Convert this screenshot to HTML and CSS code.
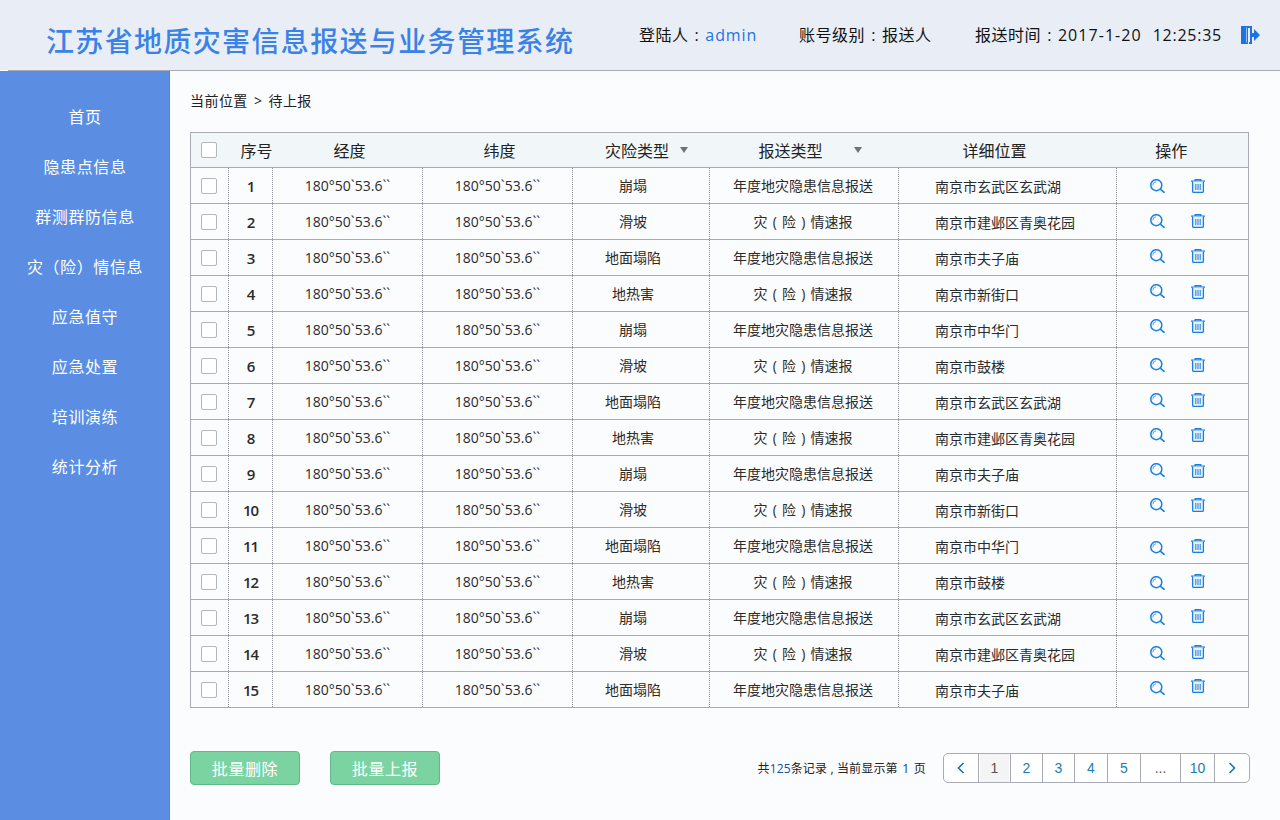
FILE: index.html
```html
<!DOCTYPE html>
<html lang="zh-CN">
<head>
<meta charset="utf-8">
<title>江苏省地质灾害信息报送与业务管理系统</title>
<link rel="stylesheet" href="styles.css">
</head>
<body>
<svg class="defs" width="0" height="0" aria-hidden="true">
  <symbol id="i-search" viewBox="0 0 15 14"><circle cx="6.3" cy="6.2" r="5.5" fill="none" stroke="currentColor" stroke-width="1.5"/><path d="M10.2 10.1 14.6 13.8" fill="none" stroke="currentColor" stroke-width="1.6"/><path d="M2.8 6.4A3.4 3.4 0 0 1 6 2.8" fill="none" stroke="currentColor" stroke-width=".9" opacity=".8"/></symbol>
  <symbol id="i-trash" viewBox="0 0 14 14"><path d="M0 2.1H14M4.2 1.9V.6H9.8V1.9" fill="none" stroke="currentColor" stroke-width="1.3"/><path d="M1.6 2.6V12.2Q1.6 13.4 2.8 13.4H11.2Q12.4 13.4 12.4 12.2V2.6" fill="#e6f1fb" stroke="currentColor" stroke-width="1.3"/><path d="M4.8 5V11M7 5V11M9.2 5V11" fill="none" stroke="currentColor" stroke-width="1"/></symbol>
</svg>
<header class="top">
  <h1 class="title">江苏省地质灾害信息报送与业务管理系统</h1>
  <div class="info">
    <span class="login">登陆人<i class="colon">:</i><b class="admin">admin</b></span>
    <span class="level">账号级别<i class="colon">:</i>报送人</span>
    <span class="time">报送时间<i class="colon">:</i><i class="date">2017-1-20</i><i class="clock">12:25:35</i></span>
    <svg class="exit" viewBox="0 0 19 18" width="19" height="18"><path d="M0 0H11V7H9V2H7V18H0Z" fill="#1c73e6"/><path d="M5 1.5H6V16.5H5Z" fill="#9cc3f4"/><path d="M9 11H11V18H8V16H9Z" fill="#1c73e6"/><path d="M9 7H13V3L19 9 13 15V11H9Z" fill="#1c73e6"/></svg>
  </div>
</header>
<div class="shell">
  <nav class="side">
    <a>首页</a><a>隐患点信息</a><a>群测群防信息</a><a>灾（险）情信息</a><a>应急值守</a><a>应急处置</a><a>培训演练</a><a>统计分析</a>
  </nav>
  <main class="main">
    <div class="crumb">当前位置 &gt; 待上报</div>
    <table class="grid">
      <colgroup><col class="c0"><col class="c1"><col class="c2"><col class="c3"><col class="c4"><col class="c5"><col class="c6"><col class="c7"></colgroup>
      <thead><tr>
        <th><span class="box"></span></th><th class="h-no">序号</th><th class="h-geo">经度</th><th class="h-geo">纬度</th>
        <th><span class="sort s4">灾险类型<i class="tri"></i></span></th>
        <th><span class="sort s5">报送类型<i class="tri"></i></span></th>
        <th class="h-loc">详细位置</th><th class="h-op">操作</th>
      </tr></thead>
      <tbody>
        <tr><td><span class="box"></span></td><td class="no">1</td><td>180°50`53.6``</td><td>180°50`53.6``</td><td class="kind">崩塌</td><td class="kind2">年度地灾隐患信息报送</td><td class="loc">南京市玄武区玄武湖</td><td class="ops"><svg class="ic-s"><use href="#i-search"/></svg><svg class="ic-t"><use href="#i-trash"/></svg></td></tr>
        <tr><td><span class="box"></span></td><td class="no">2</td><td>180°50`53.6``</td><td>180°50`53.6``</td><td class="kind">滑坡</td><td class="kind2">灾 ( 险 ) 情速报</td><td class="loc">南京市建邺区青奥花园</td><td class="ops"><svg class="ic-s"><use href="#i-search"/></svg><svg class="ic-t"><use href="#i-trash"/></svg></td></tr>
        <tr><td><span class="box"></span></td><td class="no">3</td><td>180°50`53.6``</td><td>180°50`53.6``</td><td class="kind">地面塌陷</td><td class="kind2">年度地灾隐患信息报送</td><td class="loc">南京市夫子庙</td><td class="ops"><svg class="ic-s"><use href="#i-search"/></svg><svg class="ic-t"><use href="#i-trash"/></svg></td></tr>
        <tr><td><span class="box"></span></td><td class="no">4</td><td>180°50`53.6``</td><td>180°50`53.6``</td><td class="kind">地热害</td><td class="kind2">灾 ( 险 ) 情速报</td><td class="loc">南京市新街口</td><td class="ops"><svg class="ic-s"><use href="#i-search"/></svg><svg class="ic-t"><use href="#i-trash"/></svg></td></tr>
        <tr><td><span class="box"></span></td><td class="no">5</td><td>180°50`53.6``</td><td>180°50`53.6``</td><td class="kind">崩塌</td><td class="kind2">年度地灾隐患信息报送</td><td class="loc">南京市中华门</td><td class="ops"><svg class="ic-s"><use href="#i-search"/></svg><svg class="ic-t"><use href="#i-trash"/></svg></td></tr>
        <tr><td><span class="box"></span></td><td class="no">6</td><td>180°50`53.6``</td><td>180°50`53.6``</td><td class="kind">滑坡</td><td class="kind2">灾 ( 险 ) 情速报</td><td class="loc">南京市鼓楼</td><td class="ops"><svg class="ic-s"><use href="#i-search"/></svg><svg class="ic-t"><use href="#i-trash"/></svg></td></tr>
        <tr><td><span class="box"></span></td><td class="no">7</td><td>180°50`53.6``</td><td>180°50`53.6``</td><td class="kind">地面塌陷</td><td class="kind2">年度地灾隐患信息报送</td><td class="loc">南京市玄武区玄武湖</td><td class="ops"><svg class="ic-s"><use href="#i-search"/></svg><svg class="ic-t"><use href="#i-trash"/></svg></td></tr>
        <tr><td><span class="box"></span></td><td class="no">8</td><td>180°50`53.6``</td><td>180°50`53.6``</td><td class="kind">地热害</td><td class="kind2">灾 ( 险 ) 情速报</td><td class="loc">南京市建邺区青奥花园</td><td class="ops"><svg class="ic-s"><use href="#i-search"/></svg><svg class="ic-t"><use href="#i-trash"/></svg></td></tr>
        <tr><td><span class="box"></span></td><td class="no">9</td><td>180°50`53.6``</td><td>180°50`53.6``</td><td class="kind">崩塌</td><td class="kind2">年度地灾隐患信息报送</td><td class="loc">南京市夫子庙</td><td class="ops"><svg class="ic-s"><use href="#i-search"/></svg><svg class="ic-t"><use href="#i-trash"/></svg></td></tr>
        <tr><td><span class="box"></span></td><td class="no">10</td><td>180°50`53.6``</td><td>180°50`53.6``</td><td class="kind">滑坡</td><td class="kind2">灾 ( 险 ) 情速报</td><td class="loc">南京市新街口</td><td class="ops"><svg class="ic-s"><use href="#i-search"/></svg><svg class="ic-t"><use href="#i-trash"/></svg></td></tr>
        <tr><td><span class="box"></span></td><td class="no">11</td><td>180°50`53.6``</td><td>180°50`53.6``</td><td class="kind">地面塌陷</td><td class="kind2">年度地灾隐患信息报送</td><td class="loc">南京市中华门</td><td class="ops"><svg class="ic-s"><use href="#i-search"/></svg><svg class="ic-t"><use href="#i-trash"/></svg></td></tr>
        <tr><td><span class="box"></span></td><td class="no">12</td><td>180°50`53.6``</td><td>180°50`53.6``</td><td class="kind">地热害</td><td class="kind2">灾 ( 险 ) 情速报</td><td class="loc">南京市鼓楼</td><td class="ops"><svg class="ic-s"><use href="#i-search"/></svg><svg class="ic-t"><use href="#i-trash"/></svg></td></tr>
        <tr><td><span class="box"></span></td><td class="no">13</td><td>180°50`53.6``</td><td>180°50`53.6``</td><td class="kind">崩塌</td><td class="kind2">年度地灾隐患信息报送</td><td class="loc">南京市玄武区玄武湖</td><td class="ops"><svg class="ic-s"><use href="#i-search"/></svg><svg class="ic-t"><use href="#i-trash"/></svg></td></tr>
        <tr><td><span class="box"></span></td><td class="no">14</td><td>180°50`53.6``</td><td>180°50`53.6``</td><td class="kind">滑坡</td><td class="kind2">灾 ( 险 ) 情速报</td><td class="loc">南京市建邺区青奥花园</td><td class="ops"><svg class="ic-s"><use href="#i-search"/></svg><svg class="ic-t"><use href="#i-trash"/></svg></td></tr>
        <tr><td><span class="box"></span></td><td class="no">15</td><td>180°50`53.6``</td><td>180°50`53.6``</td><td class="kind">地面塌陷</td><td class="kind2">年度地灾隐患信息报送</td><td class="loc">南京市夫子庙</td><td class="ops"><svg class="ic-s"><use href="#i-search"/></svg><svg class="ic-t"><use href="#i-trash"/></svg></td></tr>
      </tbody>
    </table>
    <div class="foot">
      <button class="btn">批量删除</button>
      <button class="btn">批量上报</button>
      <div class="summary">共<b>125</b>条记录 , 当前显示第 <b class="cur">1</b> 页</div>
      <div class="pager">
        <a class="p arrow"><svg viewBox="0 0 10 14" width="10" height="14"><path d="M7.5 2 2.5 7 7.5 12" fill="none" stroke="currentColor" stroke-width="1.5"/></svg></a>
        <a class="p active">1</a><a class="p">2</a><a class="p">3</a><a class="p wide">4</a><a class="p wide">5</a><a class="p dots">...</a><a class="p ten">10</a>
        <a class="p arrow last"><svg viewBox="0 0 10 14" width="10" height="14"><path d="M2.5 2 7.5 7 2.5 12" fill="none" stroke="currentColor" stroke-width="1.5"/></svg></a>
      </div>
    </div>
  </main>
</div>
</body>
</html>
```
FILE: styles.css
```css
* { box-sizing: border-box; }
html, body { margin: 0; height: 100%; }
body {
  width: 1280px; height: 820px; overflow: hidden;
  background: #fbfcfe; color: #222;
  font-family: "Open Sans", "Noto Sans CJK SC", sans-serif;
  font-size: 14px;
}
.defs { position: absolute; }
.top {
  position: relative;
  height: 71px; display: flex; align-items: flex-start;
  background: #e9eef6; border-bottom: 1px solid #a9abb2;
}
.top::after { content: ""; position: absolute; left: 0; bottom: -1px; width: 8px; height: 1px; background: #fff; }
.title {
  margin: 22px 0 0 46px; font-size: 28px; line-height: 38px; font-weight: 500;
  letter-spacing: 1.35px; color: #3b82e6; white-space: nowrap;
}
.info { margin-left: auto; display: flex; align-items: center; height: 24px; margin-top: 23px; font-size: 16px; letter-spacing: .55px; color: #111; line-height: 24px; white-space: nowrap; }
.login { width: 160px; }
.colon { font-style: normal; margin: 0 6px; }
.admin { font-weight: 400; color: #1c73e6; letter-spacing: .9px; }
.level { width: 176px; }
.date { font-style: normal; letter-spacing: 1.05px; }
.clock { font-style: normal; margin-left: 11px; letter-spacing: .75px; }
.exit { margin: 0 20px 0 19px; }
.shell { display: flex; height: 749px; }
.side { width: 170px; background: #5b8ee2; border-right: 1px solid #6d7f9e; padding-top: 21px; flex: none; }
.side a { display: block; height: 50px; line-height: 50px; text-align: center; color: #fff; font-size: 16px; letter-spacing: .6px; padding-left: 1px; }
.main { flex: 1; padding: 20px 30px 0 20px; }
.crumb { font-size: 14px; letter-spacing: .45px; word-spacing: 2px; line-height: 20px; color: #222; }
.grid {
  margin-top: 21px; width: 1058px; table-layout: fixed; border-collapse: collapse;
  border: 1px solid #a9abb2;
}
.c0 { width: 38px; } .c1 { width: 44px; } .c2 { width: 150px; } .c3 { width: 150px; }
.c4 { width: 137px; } .c5 { width: 189px; } .c6 { width: 218px; } .c7 { width: 132px; }
th { height: 35px; padding: 0; background: #f1f6f9; font-weight: 400; font-size: 16px; color: #222; border-bottom: 1px solid #a9abb2; text-align: center; }
td { height: 36px; padding: 0; text-align: center; font-size: 14px; color: #2b2b2b; border-bottom: 1px solid #a9abb2; border-left: 1px dotted #8d8f96; white-space: nowrap; }
td:first-child { border-left: 0; }
.box { display: block; width: 16px; height: 16px; margin: 0 0 0 10px; background: #fff; border: 1px solid #b5b6bb; border-radius: 2px; }
.h-no { padding-left: 12px; }
.h-geo { padding-left: 4px; }
.h-loc { padding-right: 26px; }
.h-op { padding-right: 22px; }
.no { font-size: 15px; font-weight: 600; letter-spacing: -1px; padding-top: 1px; }
.kind { padding: 0 16px 2px 0; }
.kind2 { padding-bottom: 2px; padding-right: 2px; word-spacing: 1.5px; }
.loc { text-align: left; padding: 0 0 0 36px; }
.sort { display: inline-flex; align-items: center; }
.s4 { margin-left: 11px; }
.s5 { margin-left: 12px; }
.tri { width: 0; height: 0; border: 4.5px solid transparent; border-top: 6px solid #6f7276; border-bottom: 0; }
.s4 .tri { margin-left: 11px; }
.s5 .tri { margin-left: 31px; }
.ops { color: #1a7fe0; text-align: left; vertical-align: top; padding: 0 0 0 33px; line-height: 0; }
.ops svg { display: inline-block; vertical-align: top; }
.ic-s { width: 15px; height: 14px; margin-top: var(--s); }
.ic-t { width: 14px; height: 14px; margin-left: 26px; margin-top: var(--t); }
tbody tr:nth-child(1) { --s: 11px; --t: 11px; }
tbody tr:nth-child(2) { --s: 10px; --t: 10px; }
tbody tr:nth-child(3) { --s: 9px; --t: 9px; }
tbody tr:nth-child(4) { --s: 8px; --t: 9px; }
tbody tr:nth-child(5) { --s: 7px; --t: 7px; }
tbody tr:nth-child(6) { --s: 10px; --t: 10px; }
tbody tr:nth-child(7) { --s: 9px; --t: 9px; }
tbody tr:nth-child(8) { --s: 8px; --t: 8px; }
tbody tr:nth-child(9) { --s: 7px; --t: 8px; }
tbody tr:nth-child(10) { --s: 6px; --t: 6px; }
tbody tr:nth-child(11) { --s: 13px; --t: 11px; }
tbody tr:nth-child(12) { --s: 12px; --t: 10px; }
tbody tr:nth-child(13) { --s: 11px; --t: 9px; }
tbody tr:nth-child(14) { --s: 10px; --t: 9px; }
tbody tr:nth-child(15) { --s: 9px; --t: 7px; }
.foot { display: flex; align-items: center; margin-top: 42px; height: 36px; }
.btn {
  width: 110px; height: 34px; padding: 0; background: #7cd3a2; color: #fff; font: inherit; font-size: 16px; letter-spacing: .6px;
  border: 1px solid #5fb989; border-radius: 4px; margin-right: 30px;
}
.summary { margin-left: auto; font-size: 12px; letter-spacing: .15px; color: #222; margin-right: 17px; white-space: nowrap; }
.summary b { font-weight: 400; color: #0f4ea3; }
.summary .cur { font-size: 13px; margin: 0 1px; }
.pager { display: flex; height: 30px; border: 1px solid #a9abb2; border-radius: 5px; background: #fff; overflow: hidden; font-family: "Liberation Sans", sans-serif; }
.p { width: 32px; line-height: 28px; text-align: center; font-size: 14px; color: #1c7ab8; border-left: 1px solid #a9abb2; }
.wide { width: 33px; }
.arrow { width: 34px; border-left: 0; display: flex; align-items: center; justify-content: center; color: #0c6fb8; }
.arrow.last { width: 35px; border-left: 1px solid #a9abb2; }
.active { background: #f4f4f4; color: #555; box-shadow: inset 1px 0 #fff, inset -1px 0 #fff; }
.dots { width: 40px; color: #555; }
.ten { width: 34px; }
```
